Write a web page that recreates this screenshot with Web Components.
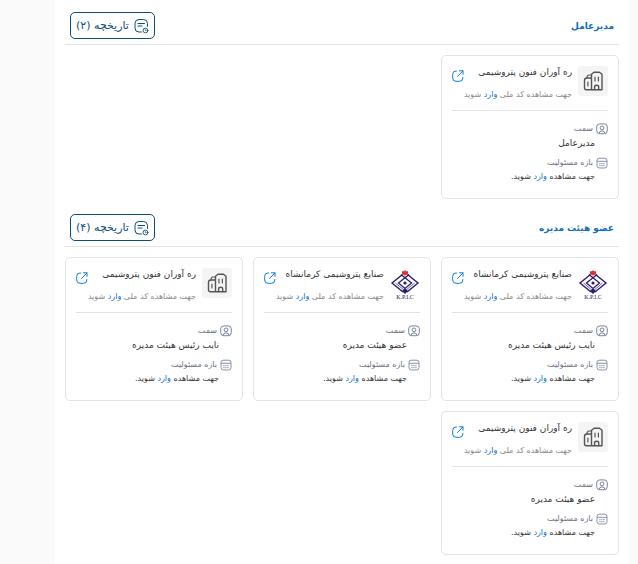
<!DOCTYPE html>
<html lang="fa" dir="rtl">
<head>
<meta charset="utf-8">
<meta name="viewport" content="width=device-width, initial-scale=1">
<title>هیئت مدیره</title>
<style>
  body {
    margin: 0;
    background: #fafafa;
    color: #333;
    font-family: "DejaVu Sans", "Noto Sans", sans-serif;
    font-size: 8px;
    --blue: #0d6ebd;
    --navy: #0f4c75;
    --line: #e2e3e5;
  }
</style>
</head>
<body>
<board-page>
  <board-section heading="مدیرعامل" count="۲">
    <member-card name="ره آوران فنون پتروشیمی" role-name="مدیرعامل"></member-card>
  </board-section>
  <board-section heading="عضو هیئت مدیره" count="۴">
    <member-card name="صنایع پتروشیمی کرمانشاه" role-name="نایب رئیس هیئت مدیره" logo="kpic"></member-card>
    <member-card name="صنایع پتروشیمی کرمانشاه" role-name="عضو هیئت مدیره" logo="kpic"></member-card>
    <member-card name="ره آوران فنون پتروشیمی" role-name="نایب رئیس هیئت مدیره"></member-card>
    <member-card name="ره آوران فنون پتروشیمی" role-name="عضو هیئت مدیره"></member-card>
  </board-section>
</board-page>

<script>
  const icons = {
    history: `
      <svg width="15" height="16" viewBox="0 0 15 16" fill="none" stroke="#0f4c75" stroke-linecap="round" stroke-linejoin="round">
        <path d="M7.500 14H5Q1 14 1 10V5.500Q1 1.500 5 1.500H9.500Q13.500 1.500 13.500 5.500V8.500"/>
        <path d="M4 5.500H10.500M4 8H8"/>
        <circle cx="11.500" cy="12.500" r="2.400" stroke-width=".9"/>
        <path d="M11.300 11.500V12.700H12.300" stroke-width=".7"/>
      </svg>`,
    open: `
      <svg width="12" height="12" viewBox="0 0 12 12" fill="none" stroke="#0d7dd0" stroke-linecap="round" stroke-linejoin="round">
        <path d="M4.500 1H4Q.7 1 .7 4.300V8Q.7 11.300 4 11.300H7.500Q10.800 11.300 10.800 8V7.500"/>
        <path d="M5.500 6.500L10.900 1M7.500 .8H11V4.300"/>
      </svg>`,
    person: `
      <svg width="12" height="12" viewBox="0 0 12 12" fill="none" stroke="#6b7690" stroke-width=".9">
        <rect x=".7" y=".9" width="10.600" height="9.800" rx="3"/>
        <circle cx="6" cy="4.900" r="1.900"/>
        <path d="M3 10.500Q3.300 7.900 6 7.900Q8.700 7.900 9 10.500"/>
      </svg>`,
    calendar: `
      <svg width="12" height="12" viewBox="0 0 12 12" fill="none" stroke="#6b7690" stroke-width=".8">
        <path d="M1 3.500Q1 1.200 3.500 1.200H8.500Q11 1.200 11 3.500V8.500Q11 11 8.500 11H3.500Q1 11 1 8.500Z"/>
        <path d="M1 4.300H11"/>
        <path d="M3.200 6.700H8.800M3.200 8.700H8.800" stroke-dasharray="1.400 .6"/>
      </svg>`
  };

  const logos = {
    building: `
      <svg width="30" height="30" viewBox="0 0 30 30" fill="none" stroke="#555" stroke-width="1.400" stroke-linejoin="round" stroke-linecap="round" role="img" aria-label="شرکت">
        <rect width="30" height="30" rx="3" fill="#f4f4f4" stroke="none"/>
        <path d="M13.500 23.700V8.300L16 6.300H21.500L24 8.300V23.700H8.500Q6.500 23.700 6.500 21.700V14.500Q6.500 12 9 12H13.500"/>
        <path d="M13.500 9H11Q9 9 9 12M9.900 16V20M17 11V15M20.400 11V15" stroke-width="1.200"/>
        <path d="M16.600 23.500V21Q16.600 19.300 18.700 19.300Q20.700 19.300 20.700 21V23.500"/>
      </svg>`,
    kpic: `
      <svg width="30" height="32" viewBox="0 0 30 32" fill="none" role="img" aria-label="K.P.I.C">
        <path d="M12.500 6.500L2 15L13 24M17.500 6.500L28 15L17 24" stroke="#2b1a70" stroke-width="1.400"/>
        <path d="M11 6.500L21.500 15L15 20.500L8.500 15L19 6.500" stroke="#2b1a70" stroke-width="1.300"/>
        <path d="M5.500 15L15 23L24.500 15" stroke="#2b1a70" stroke-width=".7"/>
        <circle cx="15" cy="15" r="1.600" fill="#2b1a70"/>
        <path d="M15 20.500L18 23L15 26L12 23Z" fill="#2b1a70"/>
        <path d="M15 2L16 3.300H18V6L15 7.500L12 6V3.300H14Z" fill="#df3131"/>
        <text x="15" y="31" text-anchor="middle" direction="ltr" font-family="Liberation Serif, serif" font-size="6" fill="#2b1a70">K.P.I.C</text>
      </svg>`
  };

  class BoardPage extends HTMLElement {
    constructor() {
      super();
      this.attachShadow({ mode: 'open' });
      this.shadowRoot.innerHTML = `
        <style>
          :host {
            display: block;
            box-sizing: border-box;
            min-height: 100vh;
            margin-right: 9px;
            margin-left: 55px;
            padding: 7px 10px 9px;
            background: #fff;
          }
          main {
            display: flex;
            flex-direction: column;
            gap: 10px;
          }
        </style>
        <main><slot></slot></main>
      `;
    }
  }

  class BoardSection extends HTMLElement {
    constructor() {
      super();
      this.attachShadow({ mode: 'open' });
      this.shadowRoot.innerHTML = `
        <style>
          :host { display: block; }
          header {
            display: flex;
            align-items: center;
            justify-content: space-between;
            padding: 5px;
            border-bottom: 1px solid var(--line);
          }
          h2 {
            margin: 0;
            color: var(--blue);
            font-size: 9px;
            line-height: 16px;
          }
          button {
            display: flex;
            align-items: center;
            gap: 5px;
            height: 27px;
            padding: 0 5px;
            border: 1px solid var(--navy);
            border-radius: 5px;
            background: #fff;
            color: var(--navy);
            font: inherit;
            font-size: 11px;
            white-space: nowrap;
          }
          .cards {
            display: grid;
            grid-template-columns: repeat(3, minmax(0, 1fr));
            gap: 10px;
            padding-top: 10px;
          }
        </style>
        <section>
          <header>
            <h2></h2>
            <button type="button">${icons.history}<span></span></button>
          </header>
          <div class="cards"><slot></slot></div>
        </section>
      `;
    }

    connectedCallback() {
      this.shadowRoot.querySelector('h2').textContent = this.getAttribute('heading');
      this.shadowRoot.querySelector('button span').textContent = `تاریخچه (${this.getAttribute('count')})`;
    }
  }

  class MemberCard extends HTMLElement {
    constructor() {
      super();
      this.attachShadow({ mode: 'open' });
      this.shadowRoot.innerHTML = `
        <style>
          :host {
            display: block;
            box-sizing: border-box;
            min-width: 0;
            padding: 10px 10px 8px;
            border: 1px solid var(--line);
            border-radius: 5px;
            background: #fff;
          }
          svg { display: block; flex: none; }
          a { color: var(--blue); text-decoration: none; }
          .top {
            display: flex;
            gap: 6px;
            height: 44px;
            border-bottom: 1px solid var(--line);
          }
          .info { flex: 1; min-width: 0; }
          .title {
            display: flex;
            justify-content: space-between;
            height: 22px;
          }
          h3 {
            margin: 0;
            font-size: 9px;
            font-weight: 400;
            line-height: 12px;
            white-space: nowrap;
          }
          .title a { padding-top: 4px; }
          p {
            margin: 0;
            color: #888;
            line-height: 14px;
            white-space: nowrap;
          }
          dl { margin: 11px 0 0; }
          dt {
            display: flex;
            align-items: center;
            gap: 3px;
            color: #6b7280;
            line-height: 14px;
          }
          dd {
            margin: 0 13px 6px 0;
            line-height: 14px;
          }
          .role { font-size: 9px; }
        </style>
        <article>
          <div class="top">
            <div class="logo"></div>
            <div class="info">
              <div class="title"><h3></h3><a href="#" aria-label="مشاهده شرکت">${icons.open}</a></div>
              <p>جهت مشاهده کد ملی <a href="#">وارد</a> شوید</p>
            </div>
          </div>
          <dl>
            <dt>${icons.person}سمت</dt>
            <dd class="role"></dd>
            <dt>${icons.calendar}بازه مسئولیت</dt>
            <dd>جهت مشاهده <a href="#">وارد</a> شوید.</dd>
          </dl>
        </article>
      `;
    }

    connectedCallback() {
      this.shadowRoot.querySelector('.logo').innerHTML = logos[this.getAttribute('logo') || 'building'];
      this.shadowRoot.querySelector('h3').textContent = this.getAttribute('name');
      this.shadowRoot.querySelector('.role').textContent = this.getAttribute('role-name');
    }
  }

  customElements.define('board-page', BoardPage);
  customElements.define('board-section', BoardSection);
  customElements.define('member-card', MemberCard);
</script>
</body>
</html>
